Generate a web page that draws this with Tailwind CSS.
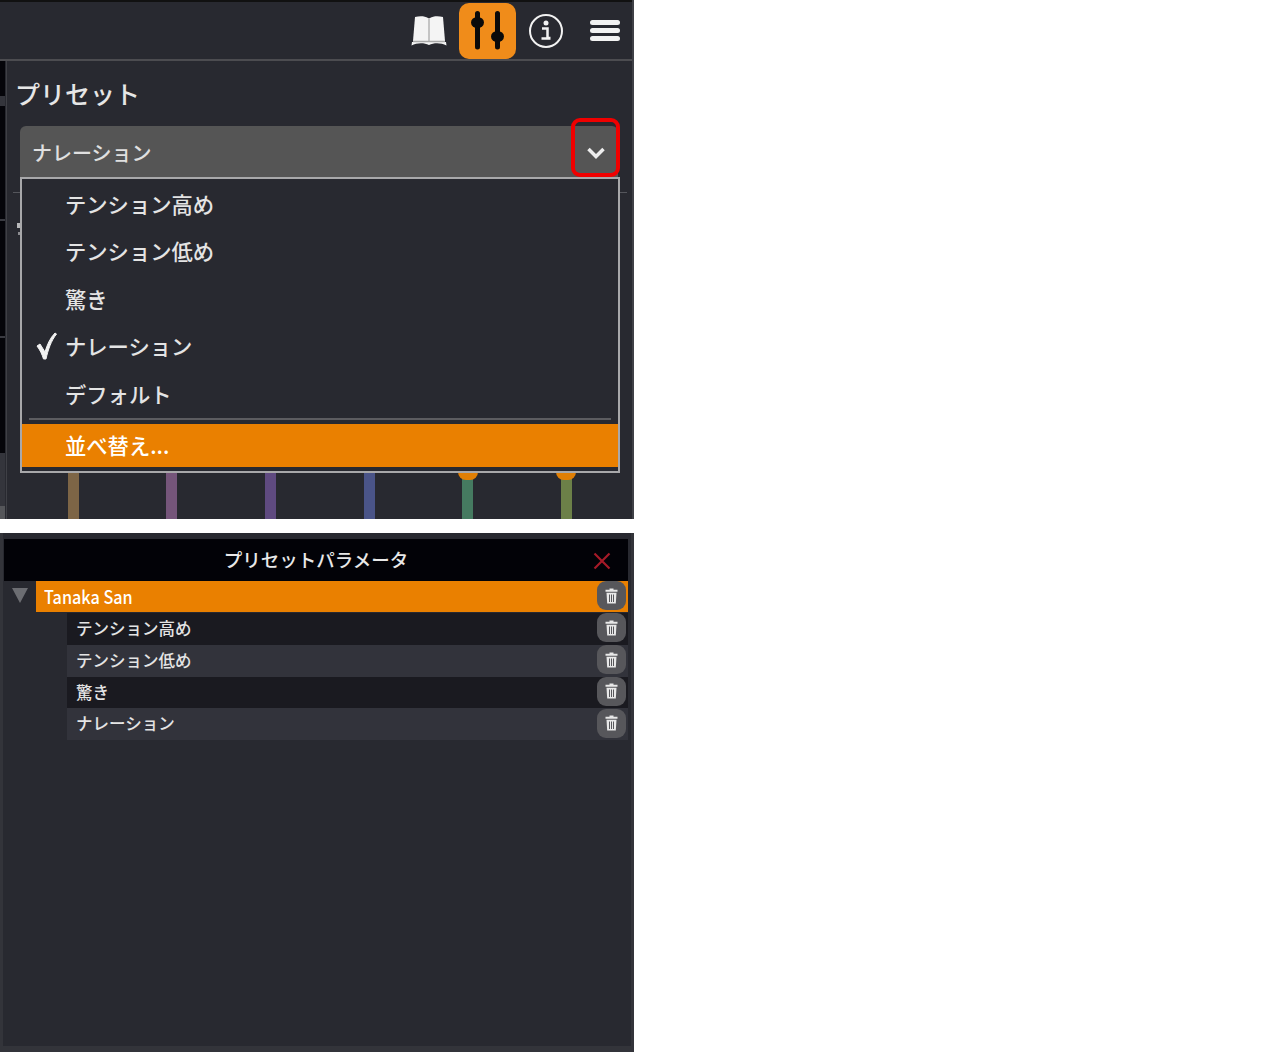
<!DOCTYPE html>
<html lang="ja">
<head>
  <meta charset="UTF-8" />
  <title>プリセット</title>
  <script src="https://cdn.jsdelivr.net/npm/@tailwindcss/browser@4"></script>
</head>
<body class="bg-white font-['Noto_Sans_CJK_JP','Noto_Sans',sans-serif] font-medium text-[#e8e8e8]">

<!-- preset dropdown -->
<div class="relative w-[634px] h-[519px] bg-[#282930] overflow-hidden border-r-2 border-[#3f4046]">
  <div class="h-[61px] border-b-2 border-[#4c4c50] border-t-2 border-t-[#111] flex justify-end items-center pr-[12px]">
    <svg class="w-[38px] h-[32px] mr-[11px]" viewBox="0 0 38 32">
      <path d="M5 2 C10 .5 15 1 18 3 V26 H3 Z" fill="#f4f4f4"/>
      <path d="M33 2 C28 .5 23 1 20 3 V26 H35 Z" fill="#f4f4f4"/>
      <path d="M19 3 V27" stroke="#c4c4c4" stroke-width="2"/>
      <path d="M1.500 30.500 C7 27.500 14 27.500 19 30 C24 27.500 31 27.500 36.500 30.500 L36 27 H2 Z" fill="#f4f4f4"/>
      <path d="M3 26.500 H35" stroke="#a8a8a8" stroke-width="1.500"/>
    </svg>
    <div class="w-[57px] h-[56px] mt-[1px] rounded-[10px] bg-[#f08c1a] flex items-center justify-center">
      <svg class="w-[40px] h-[40px]" viewBox="0 0 40 40">
        <path d="M9.500 2.500 V36 M29.500 2.500 V36" stroke="#0a0a0a" stroke-width="5" stroke-linecap="round"/>
        <ellipse cx="9.500" cy="11.500" rx="6.500" ry="5.500" fill="#0a0a0a"/>
        <ellipse cx="29.500" cy="25.500" rx="6.500" ry="5.500" fill="#0a0a0a"/>
      </svg>
    </div>
    <div class="w-[34px] h-[34px] ml-[13px] rounded-full border-[2.5px] border-[#f2f2f2] flex items-center justify-center">
      <svg class="w-[14px] h-[21px]" viewBox="0 0 14 21">
        <circle cx="7" cy="3" r="2.500" fill="#f2f2f2"/>
        <path d="M3 8.500 H8.500 V18 H11.500 M2.500 18.500 H11.500" fill="none" stroke="#f2f2f2" stroke-width="2.500"/>
      </svg>
    </div>
    <div class="w-[30px] ml-[27px] flex flex-col gap-[3.500px]">
      <div class="h-[4.500px] rounded-sm bg-[#f2f2f2]"></div>
      <div class="h-[4.500px] rounded-sm bg-[#f2f2f2]"></div>
      <div class="h-[4.500px] rounded-sm bg-[#f2f2f2]"></div>
    </div>
  </div>

  <div class="flex h-[458px]">
    <!-- side strip, cut off by the panel -->
    <div class="w-[6px] shrink-0 flex flex-col pr-px">
      <div class="h-[35px] bg-[#05050a]"></div>
      <div class="h-[10px] bg-[#34353c]"></div>
      <div class="h-[113px] bg-[#05050a]"></div>
      <div class="h-[2px] bg-[#3a3b42]"></div>
      <div class="h-[115px] bg-[#05050a]"></div>
      <div class="h-[2px] bg-[#3a3b42]"></div>
      <div class="h-[115px] bg-[#05050a]"></div>
      <div class="h-[53px] bg-[#34353c]"></div>
      <div class="grow bg-[#55565a]"></div>
    </div>
    <div class="grow border-l border-[#3f4046] pl-[8px] pr-[5px]">
      <h2 class="text-[25px] leading-[34px] mt-[15px] text-[#e6e6e6]">プリセット</h2>
      <div class="mt-[16px] ml-[5px] mr-[9px] h-[52px] pt-[2px] bg-[#555555] rounded-t-[6px] flex items-center justify-between pl-[12px] pr-[12px]">
        <span class="text-[20px] text-[#e0e0e0]">ナレーション</span>
        <svg class="w-[20px] h-[14px]" viewBox="0 0 20 14"><path d="M2.500 3 L10 10.500 L17.500 3" fill="none" stroke="#eee" stroke-width="3.500"/></svg>
      </div>
      <div class="mt-[14px] -ml-[2px] border-t border-[#55565c] h-0"></div>
    </div>
  </div>

  <!-- bit of a label showing beside the menu -->
  <div class="absolute left-[17px] top-[223px] w-[3px] h-[5px] bg-[#b8b8ba]"></div>
  <div class="absolute left-[18px] top-[232px] w-[2px] h-[3px] bg-[#8c8c90]"></div>

  <!-- sliders poking out under the menu -->
  <div class="absolute left-[68px] top-[472px] w-[11px] h-[47px] bg-[#7d6546]"></div>
  <div class="absolute left-[166px] top-[472px] w-[11px] h-[47px] bg-[#75557a]"></div>
  <div class="absolute left-[265px] top-[472px] w-[11px] h-[47px] bg-[#5f4a80]"></div>
  <div class="absolute left-[364px] top-[472px] w-[11px] h-[47px] bg-[#4a5488]"></div>
  <div class="absolute left-[462px] top-[472px] w-[11px] h-[47px] bg-[#457a60]"></div>
  <div class="absolute left-[561px] top-[472px] w-[11px] h-[47px] bg-[#6c8048]"></div>
  <div class="absolute left-[458px] top-[464px] w-[20px] h-[16px] rounded-full bg-[#e07f05]"></div>
  <div class="absolute left-[556px] top-[464px] w-[20px] h-[16px] rounded-full bg-[#e07f05]"></div>

  <!-- open menu -->
  <div class="absolute left-[20px] top-[177px] w-[600px] h-[296px] border-2 border-[#a8a8aa] bg-[#282930] text-[21.300px] text-[#e4e4e4]">
    <ul class="pt-[1px]">
      <li class="h-[47.500px] pl-[43px] flex items-center">テンション高め</li>
      <li class="h-[47.500px] pl-[43px] flex items-center">テンション低め</li>
      <li class="h-[47.500px] pl-[43px] flex items-center">驚き</li>
      <li class="relative h-[47.500px] pl-[43px] flex items-center">
        <svg class="absolute left-[14px] top-[9px] w-[21px] h-[28px]" viewBox="0 0 21 28"><path d="M1 14 L4 12 L9 20 C11 13 14 6 19 1 L20.500 2 C15 9 12 18 10 27 L7.500 27 C6 22 4 18 1 14 Z" fill="#f2f2f2" stroke="#f2f2f2"/></svg>
        ナレーション
      </li>
      <li class="h-[47.500px] pl-[43px] flex items-center">デフォルト</li>
    </ul>
    <div class="mx-[7px] h-[2px] bg-[#5c5c60]"></div>
    <div class="mt-[4px] h-[43px] bg-[#ea8000] pl-[43px] flex items-center text-white">並べ替え...</div>
  </div>

  <!-- red callout -->
  <div class="absolute left-[571px] top-[118px] w-[49px] h-[59px] border-4 border-[#f00000] rounded-[9px]"></div>
</div>

<div class="h-[14px]"></div>

<!-- preset parameter list -->
<div class="w-[634px] h-[519px] bg-[#282930] pt-[6px] pl-[4px] pr-[6px] border-l-[3px] border-r-[3px] border-b-[6px] border-[#33343a]">
  <div class="relative -ml-[3px] -mr-[3px] h-[42px] bg-[#020207] flex items-center justify-center text-[18.500px] text-[#e8e8e8]">
    プリセットパラメータ
    <svg class="absolute right-[17px] top-[13px] w-[18px] h-[18px]" viewBox="0 0 18 18"><path d="M1.500 1.500 L16.500 16.500 M16.500 1.500 L1.500 16.500" stroke="#a51a28" stroke-width="2.200"/></svg>
  </div>
  <div class="-ml-[3px] -mr-[3px]">
    <div class="flex">
      <svg class="w-[32px] h-[32px] shrink-0" viewBox="0 0 32 32"><path d="M8 7 H24 L16 22 Z" fill="#6c6d72"/></svg>
      <div class="grow h-[31px] bg-[#ea8000] pl-[8px] flex items-center justify-between text-[18px] text-white">
        <span class="scale-x-90 origin-left">Tanaka San</span>
        <span class="w-[29px] h-[29px] mr-[2px] mb-[2px] rounded-[9px] bg-[#57575b] flex items-center justify-center"><svg class="w-[13px] h-[16px]" viewBox="0 0 13 16"><path d="M4.500 .5 H8.500 V1.800 H12.500 V3.800 H.5 V1.800 H4.500 Z M1.500 4.800 H11.500 L10.800 15.500 H2.200 Z M4 6.500 V14 H5 V6.500 Z M6 6.500 V14 H7 V6.500 Z M8 6.500 V14 H9 V6.500 Z" fill="#e8e8e8" fill-rule="evenodd"/></svg></span>
      </div>
    </div>
    <div class="ml-[63px] text-[16.500px] text-[#e4e4e4]">
      <div class="h-[31.750px] bg-[#1a1a20] pl-[9px] flex items-center justify-between">
        <span class="mb-[1px]">テンション高め</span>
        <span class="w-[29px] h-[29px] mr-[2px] mb-[2px] rounded-[9px] bg-[#57575b] flex items-center justify-center"><svg class="w-[13px] h-[16px]" viewBox="0 0 13 16"><path d="M4.500 .5 H8.500 V1.800 H12.500 V3.800 H.5 V1.800 H4.500 Z M1.500 4.800 H11.500 L10.800 15.500 H2.200 Z M4 6.500 V14 H5 V6.500 Z M6 6.500 V14 H7 V6.500 Z M8 6.500 V14 H9 V6.500 Z" fill="#e8e8e8" fill-rule="evenodd"/></svg></span>
      </div>
      <div class="h-[31.750px] bg-[#32333b] pl-[9px] flex items-center justify-between">
        <span class="mb-[1px]">テンション低め</span>
        <span class="w-[29px] h-[29px] mr-[2px] mb-[2px] rounded-[9px] bg-[#57575b] flex items-center justify-center"><svg class="w-[13px] h-[16px]" viewBox="0 0 13 16"><path d="M4.500 .5 H8.500 V1.800 H12.500 V3.800 H.5 V1.800 H4.500 Z M1.500 4.800 H11.500 L10.800 15.500 H2.200 Z M4 6.500 V14 H5 V6.500 Z M6 6.500 V14 H7 V6.500 Z M8 6.500 V14 H9 V6.500 Z" fill="#e8e8e8" fill-rule="evenodd"/></svg></span>
      </div>
      <div class="h-[31.750px] bg-[#1a1a20] pl-[9px] flex items-center justify-between">
        <span class="mb-[1px]">驚き</span>
        <span class="w-[29px] h-[29px] mr-[2px] mb-[2px] rounded-[9px] bg-[#57575b] flex items-center justify-center"><svg class="w-[13px] h-[16px]" viewBox="0 0 13 16"><path d="M4.500 .5 H8.500 V1.800 H12.500 V3.800 H.5 V1.800 H4.500 Z M1.500 4.800 H11.500 L10.800 15.500 H2.200 Z M4 6.500 V14 H5 V6.500 Z M6 6.500 V14 H7 V6.500 Z M8 6.500 V14 H9 V6.500 Z" fill="#e8e8e8" fill-rule="evenodd"/></svg></span>
      </div>
      <div class="h-[31.750px] bg-[#32333b] pl-[9px] flex items-center justify-between">
        <span class="mb-[1px]">ナレーション</span>
        <span class="w-[29px] h-[29px] mr-[2px] mb-[2px] rounded-[9px] bg-[#57575b] flex items-center justify-center"><svg class="w-[13px] h-[16px]" viewBox="0 0 13 16"><path d="M4.500 .5 H8.500 V1.800 H12.500 V3.800 H.5 V1.800 H4.500 Z M1.500 4.800 H11.500 L10.800 15.500 H2.200 Z M4 6.500 V14 H5 V6.500 Z M6 6.500 V14 H7 V6.500 Z M8 6.500 V14 H9 V6.500 Z" fill="#e8e8e8" fill-rule="evenodd"/></svg></span>
      </div>
    </div>
  </div>
</div>

</body>
</html>
